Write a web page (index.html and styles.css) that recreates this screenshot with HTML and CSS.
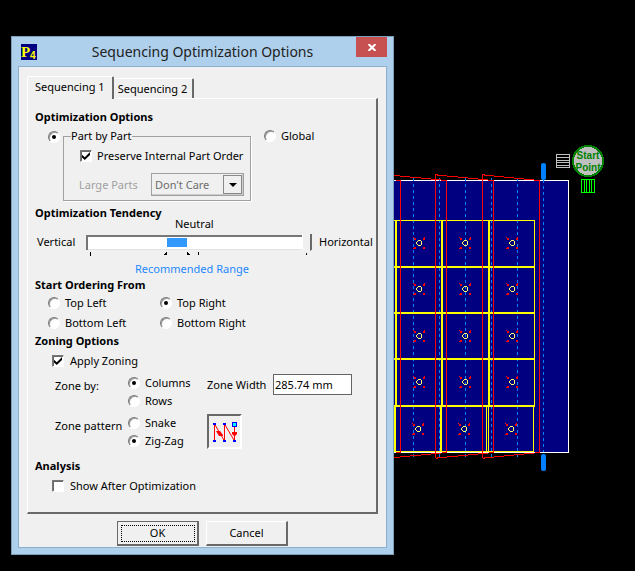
FILE: index.html
```html
<!DOCTYPE html>
<html lang="en">
<head>
<meta charset="utf-8">
<title>Sequencing Optimization Options</title>
<link rel="stylesheet" href="styles.css">
</head>
<body>
<main class="workspace">
  <svg class="drawing" role="img" aria-label="Sheet layout" shape-rendering="crispEdges">
    <defs>
      <g id="part">
        <path d="M-5-5h2v2h-2zM4-5h2v2h-2zM-5 4h2v2h-2zM4 4h2v2h-2z" fill="#f00"/>
        <path d="M-6-6h1v1h-1zM5-6h1v1h-1zM-6 5h1v1h-1zM5 5h1v1h-1z" fill="#f00"/>
        <path d="M-1-3h3v1h-3zM-1 2h3v1h-3zM-2-2h1v1h-1zM2-2h1v1h-1zM-3-1h1v2h-1zM2-1h1v2h-1zM-2 1h1v1h-1zM2 1h1v1h-1z" fill="#ff6"/>
      </g>
    </defs>
    <path d="M380 180h189v273h-189z" fill="#000080"/>
    <path d="M380 180.500h188.500v272h-188.500" fill="none" stroke="#fff"/>
    <g stroke="#0080ff" stroke-dasharray="3 3">
      <path d="M413.500 178v280M439.500 178v280M465.500 178v280M491.500 178v280M517.500 178v280M543.500 180v272"/>
    </g>
    <g fill="none" stroke="#ff0">
      <path d="M380 220.500h154.500v186M533.500 406v46M380 451.500h154M486.500 407v45M488.500 407v45"/>
      <path stroke-width="2" d="M380 267h154M380 313h154M380 359h154M380 406h154M396 221v185M442 221v185M489 221v185M395 407v45M441 407v45"/>
    </g>
    <g fill="none" stroke="#f00">
      <path d="M390 175.500h10M400 176.500h10M410 177.500h11M421 178.500h10M431 179.500h10M435.500 458v-283.500h2M437 175.500h10M447 176.500h11M458 177.500h10M468 178.500h10M478 179.500h10M482.500 458v-283.500h2M484 175.500h10M494 176.500h10M504 177.500h10M514 178.500h10M524 179.500h10"/>
      <path d="M396 180.500h4.500v272h-5M441 180.500h5.500v272h-5M488 180.500h5.500v272h-5M534 180.500h5.500v272h-5"/>
      <path d="M390 457.500h10M400 456.500h10M410 455.500h11M421 454.500h10M431 453.500h10M436 458.500h2M437 457.500h10M447 456.500h11M458 455.500h10M468 454.500h10M478 453.500h10M483 458.500h2M484 457.500h10M494 456.500h10M504 455.500h10M514 454.500h10M524 453.500h10"/>
    </g>
    <use href="#part" x="419" y="243"/><use href="#part" x="465" y="243"/><use href="#part" x="512" y="243"/>
    <use href="#part" x="419" y="289"/><use href="#part" x="465" y="289"/><use href="#part" x="512" y="289"/>
    <use href="#part" x="419" y="336"/><use href="#part" x="465" y="336"/><use href="#part" x="512" y="336"/>
    <use href="#part" x="419" y="382"/><use href="#part" x="465" y="382"/><use href="#part" x="512" y="382"/>
    <use href="#part" x="418" y="429"/><use href="#part" x="464" y="429"/><use href="#part" x="511" y="429"/>
    <g fill="#0080ff" shape-rendering="auto">
      <rect x="541" y="163" width="5" height="17" rx="2"/>
      <rect x="541" y="454" width="5" height="17" rx="2"/>
    </g>
    <path d="M556.500 154.500h13v13h-13zM557 157.500h12M557 160.500h12M557 162.500h12M557 165.500h12" fill="none" stroke="#c0c0c0"/>
    <path d="M581.500 179.500h13v13h-13zM584.500 180v12M586.500 180v12M589.500 180v12M591.500 180v12" fill="none" stroke="#0f0"/>
    <circle cx="588" cy="161" r="15" fill="#c0c0c0" stroke="#008000" stroke-width="2"/>
    <g class="start-label" text-anchor="middle"><text x="588" y="159">Start</text><text x="588" y="171">Point</text></g>
  </svg>

  <form class="window">
    <header class="titlebar">
      <svg class="app-icon" width="16" height="16" shape-rendering="crispEdges" aria-hidden="true">
        <rect width="16" height="16" fill="#000080"/>
        <g fill="#ff0"><text class="icon-p" x="0" y="13">P</text><text class="icon-4" x="9" y="15">4</text></g>
      </svg>
      <h1>Sequencing Optimization Options</h1>
      <button class="close" type="button" aria-label="Close"><svg width="8" height="7" aria-hidden="true"><path d="M.5 0 7.500 7M7.500 0 .5 7" stroke="#fff" stroke-width="2"/></svg></button>
    </header>
    <div class="client">
      <div class="tabs" role="tablist">
        <button class="tab active" type="button" role="tab" aria-selected="true">Sequencing 1</button>
        <button class="tab" type="button" role="tab" aria-selected="false">Sequencing 2</button>
      </div>
      <div class="panel" role="tabpanel">
        <section>
          <h2>Optimization Options</h2>
          <div class="mode">
            <input type="radio" name="mode" id="by-part" checked>
            <fieldset>
              <legend><label for="by-part">Part by Part</label></legend>
              <label class="choice preserve"><input type="checkbox" checked>Preserve Internal Part Order</label>
              <div class="large">
                <label for="large-parts">Large Parts</label>
                <span class="drop"><select id="large-parts" disabled><option>Don't Care</option></select></span>
              </div>
            </fieldset>
            <label class="choice"><input type="radio" name="mode">Global</label>
          </div>
        </section>

        <section class="tendency">
          <div class="tendency-head"><h2>Optimization Tendency</h2><label for="tendency">Neutral</label></div>
          <div class="slider-row">
            <span>Vertical</span>
            <input type="range" id="tendency" min="0" max="100" value="100">
            <span>Horizontal</span>
          </div>
          <svg class="ticks" width="226" height="9" shape-rendering="crispEdges" aria-hidden="true"><path d="M4 2h1v4h-1zM78 5h3v-3h-1v1h-1v1h-1zM101 2h1v1h1v1h1v1h-3zM112 2h1v3h-1zM220 1h1v4h-1z"/></svg>
          <p class="recommended">Recommended Range</p>
        </section>

        <section>
          <h2>Start Ordering From</h2>
          <div class="corners">
            <label class="choice"><input type="radio" name="corner">Top Left</label>
            <label class="choice"><input type="radio" name="corner" checked>Top Right</label>
            <label class="choice"><input type="radio" name="corner">Bottom Left</label>
            <label class="choice"><input type="radio" name="corner">Bottom Right</label>
          </div>
        </section>

        <section>
          <h2>Zoning Options</h2>
          <label class="choice toggle"><input type="checkbox" checked>Apply Zoning</label>
          <div class="zones">
            <span class="zone-label">Zone by:</span>
            <div class="stack">
              <label class="choice"><input type="radio" name="zone" checked>Columns</label>
              <label class="choice"><input type="radio" name="zone">Rows</label>
            </div>
            <div class="zone-width">
              <label for="zone-width">Zone Width</label>
              <input type="text" id="zone-width" value="285.74 mm">
            </div>
            <span class="zone-label">Zone pattern</span>
            <div class="stack">
              <label class="choice"><input type="radio" name="pattern">Snake</label>
              <label class="choice"><input type="radio" name="pattern" checked>Zig-Zag</label>
            </div>
            <button class="pattern" type="button" aria-label="Zig-zag pattern">
              <svg width="31" height="31" aria-hidden="true">
                <path d="M5.500 25V8L15.500 25V8L25.500 25V8" fill="none" stroke="#f00"/>
                <path d="M7 15h4l3 4v1h-4zM23 16h5v2l-2 2h-1l-2-2z" fill="#f00"/>
                <path d="M4 7h3v2h-3zM14 7h3v2h-3zM4 24h3v2h-3zM14 24h3v2h-3zM24 24h3v2h-3z" fill="#00f" shape-rendering="crispEdges"/>
                <rect x="23.500" y="6.500" width="4" height="4" fill="#0ff" stroke="#00f"/>
              </svg>
            </button>
          </div>
        </section>

        <section>
          <h2>Analysis</h2>
          <label class="choice toggle"><input type="checkbox">Show After Optimization</label>
        </section>
      </div>
      <div class="actions">
        <button class="push default" type="submit">OK</button>
        <button class="push" type="button">Cancel</button>
      </div>
    </div>
  </form>
</main>
</body>
</html>
```
FILE: styles.css
```css
* { box-sizing: border-box; }

body {
  margin: 0;
  background: #000;
  color: #000;
  font: 11px/16px "Noto Sans", "Open Sans", sans-serif;
}

button, input, select { font: inherit; color: inherit; margin: 0; }
h1, h2, p { margin: 0; font-size: inherit; }

.workspace {
  position: relative;
  min-height: 100vh;
  padding: 36px 11px 16px;
}

.drawing {
  position: absolute;
  inset: 0;
  width: 100%;
  height: 100%;
}

.start-label { font: bold 10px "Liberation Sans", sans-serif; fill: #008000; }
.icon-p { font: bold 15px "Liberation Serif", serif; }
.icon-4 { font: bold 10px "Liberation Sans", sans-serif; }

.window {
  position: relative;
  width: 100%;
  max-width: 383px;
  padding: 0 6px 6px;
  border: 1px solid #7c9fbc;
  background: #aed0ec;
}

.titlebar {
  display: grid;
  grid-template-columns: 32px 1fr 32px;
  align-items: center;
  height: 29px;
}
.titlebar h1 { font-size: 14px; font-weight: 400; text-align: center; color: #222; white-space: nowrap; }
.app-icon { margin-left: 3px; }
.close {
  align-self: start;
  display: grid;
  place-items: center;
  width: 31px;
  height: 20px;
  margin-left: 1px;
  padding: 0;
  border: 0;
  background: #c75050;
}

.client {
  padding: 9px 8px 1px;
  border: 1px solid #8cb0cc;
  background: #f0f0f0;
}

.tabs { display: flex; align-items: flex-end; height: 22px; }
.tab {
  height: 20px;
  padding: 0 5px 0 4px;
  border: solid #fff;
  border-width: 1px 2px 0 0;
  border-right-color: #696969;
  border-radius: 2px 2px 0 0;
  background: #f0f0f0;
  white-space: nowrap;
}
.tab.active {
  z-index: 1;
  height: 23px;
  margin-bottom: -1px;
  padding: 0 7px 3px 7px;
  border-left: 1px solid #fff;
}

.panel {
  padding: 10px 0 17px 7px;
  border: solid;
  border-width: 1px 2px 2px 1px;
  border-color: #fff #696969 #696969 #fff;
  white-space: nowrap;
}
.panel h2 { font-weight: 700; }

.choice { display: flex; align-items: center; gap: 5px; height: 18px; }

input[type="radio"], input[type="checkbox"] {
  appearance: none;
  flex: none;
  display: grid;
  place-items: center;
  width: 12px;
  height: 12px;
  border: 1px solid;
  border-color: #777 #fff #fff #777;
  background: #fff;
}
input[type="radio"] { border-radius: 50%; box-shadow: inset 1px 1px 0 #999; }
input[type="radio"]:checked::before {
  content: "";
  width: 4px;
  height: 4px;
  border-radius: 50%;
  background: #000;
}
input[type="checkbox"] { box-shadow: inset 1px 1px 0 #696969; }
input[type="checkbox"]:checked::before {
  content: "";
  width: 8px;
  height: 8px;
  background: #000;
  clip-path: polygon(0 35%, 35% 65%, 100% 0, 100% 38%, 35% 100%, 0 70%);
}

.mode {
  display: grid;
  grid-template-columns: 15px 188px 1fr;
  margin: 2px 0 0 13px;
}
.mode > input { margin-top: 4px; }
.mode > .choice { margin-left: 13px; }
fieldset {
  min-width: 0;
  margin: 0;
  padding: 2px 6px 4px 15px;
  border: 1px solid #a0a0a0;
  box-shadow: 1px 1px 0 #fff;
}
legend { height: 18px; margin-left: -8px; padding: 1px 0 0; }
.preserve { margin-left: 1px; }
.large { display: flex; align-items: center; justify-content: space-between; margin-top: 8px; color: #a0a0a0; }
.drop { position: relative; display: block; width: 93px; }
.drop::before {
  content: "";
  position: absolute;
  inset: 2px 2px 2px auto;
  width: 17px;
  border: 1px solid #888;
}
.drop::after {
  content: "";
  position: absolute;
  top: 10px;
  right: 7px;
  border: solid transparent;
  border-width: 4px 4px 0;
  border-top-color: #000;
}
select {
  appearance: none;
  display: block;
  width: 100%;
  height: 23px;
  padding: 0 18px 0 3px;
  border: 1px solid #a0a0a0;
  border-radius: 0;
  background: #f0f0f0;
  box-shadow: inset -1px -1px 0 #ccc;
}
select:disabled { color: #6d6d6d; opacity: 1; }

.tendency { margin-top: 4px; }
.tendency-head { display: grid; grid-template-columns: 140px 1fr; height: 27px; }
.tendency-head label { align-self: end; }
.slider-row {
  display: grid;
  grid-template-columns: 49px 226px 1fr;
  align-items: center;
  height: 18px;
  margin-left: 2px;
}
.slider-row span:last-child { margin-left: 7px; }
input[type="range"] {
  appearance: none;
  width: 100%;
  height: 20px;
  background: none;
}
input[type="range"]::-webkit-slider-runnable-track {
  height: 15px;
  background: linear-gradient(#3399ff, #3399ff) 81px 3px / 20px 9px no-repeat #fff;
  box-shadow: inset 2px 2px 0 #777, inset -1px -1px 0 #e3e3e3;
}
input[type="range"]::-webkit-slider-thumb {
  appearance: none;
  width: 10px;
  height: 20px;
  margin-top: -1px;
  border: 0;
  background: linear-gradient(to right, #fff 1px, #f0f0f0 1px 8px, #696969 8px);
  clip-path: polygon(0 0, 100% 0, 100% 80%, 50% 100%, 0 80%);
}
.ticks { display: block; margin-left: 51px; }
.recommended { margin: 2px 0 0 100px; color: #1e88ff; }

.corners { display: grid; grid-template-columns: 112px 1fr; grid-auto-rows: 20px; align-items: center; margin-left: 13px; }

.toggle { gap: 6px; margin: 3px 0 0 17px; }
.zones {
  display: grid;
  grid-template-columns: 64px 70px 1fr;
  column-gap: 9px;
  row-gap: 5px;
  margin: 4px 0 9px 20px;
}
.zone-label { padding-top: 4px; }
.stack { display: grid; grid-template-rows: 18px 17px; }
.zone-width { display: flex; justify-content: space-between; align-items: center; width: 145px; height: 21px; }
input[type="text"] {
  width: 79px;
  height: 21px;
  padding: 0 1px;
  border: 1px solid #646464;
  background: #fff;
}
.stack .choice { height: 17px; }
.pattern {
  width: 35px;
  height: 35px;
  padding: 0;
  border: 2px solid;
  border-color: #696969 #fff #fff #696969;
  background: #f0f0f0;
}
.pattern svg { display: block; }

.actions { display: flex; justify-content: center; gap: 7px; padding: 7px 0 0; }
.push {
  width: 82px;
  height: 25px;
  padding: 0;
  border: solid;
  border-width: 1px 2px 2px 1px;
  border-color: #fff #696969 #696969 #fff;
  background: #f0f0f0;
}
.push.default { border-color: #696969; outline: 1px dotted #000; outline-offset: -5px; }
```
